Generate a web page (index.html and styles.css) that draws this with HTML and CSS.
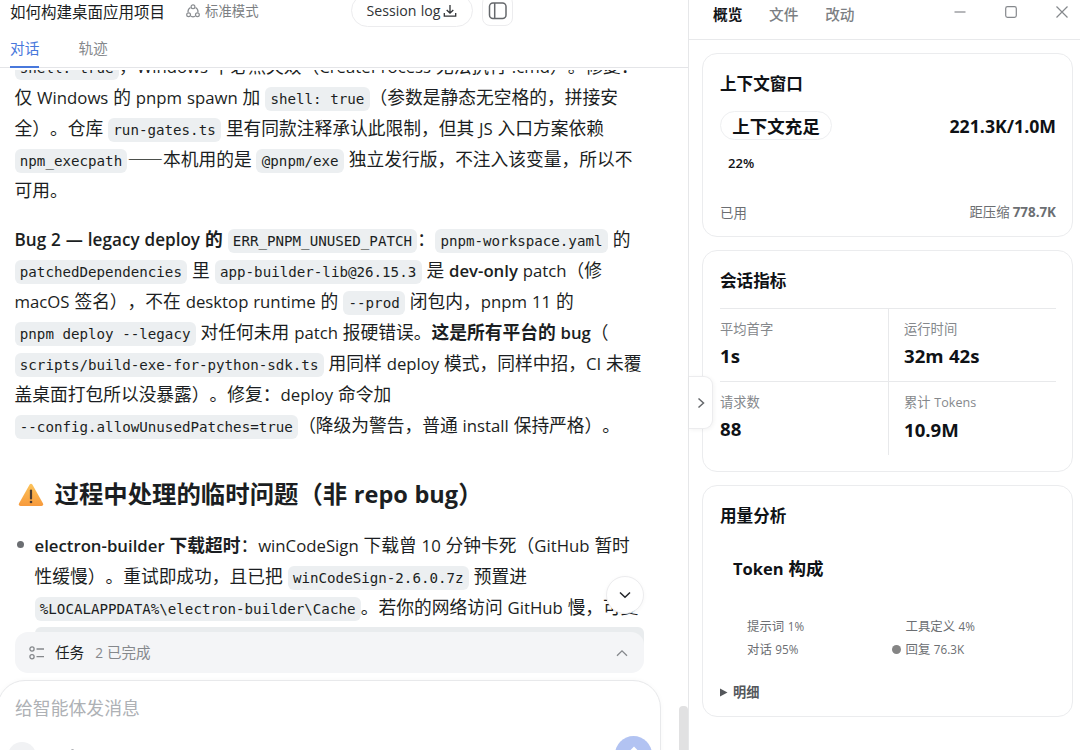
FILE: index.html
```html
<!DOCTYPE html>
<html lang="zh-CN">
<head>
<meta charset="utf-8">
<title>如何构建桌面应用项目</title>
<link rel="stylesheet" href="styles.css">
</head>
<body>
<main class="chat">
  <header class="topbar">
    <h1 class="topbar-title">如何构建桌面应用项目</h1>
    <svg class="mode-icon" width="14" height="14" viewBox="0 0 14 14" fill="none" stroke="#8a8d91" stroke-width="1.2"><circle cx="7" cy="2.7" r="1.9"/><circle cx="2.6" cy="10.8" r="1.9"/><circle cx="11.4" cy="10.8" r="1.9"/><path d="M4.5 3.6C2.6 4.8 1.8 6.500 2 8.300M9.500 3.600c1.900 1.200 2.700 2.900 2.500 4.700M5 12.300c1.200.6 2.800.6 4 0"/></svg>
    <span class="mode">标准模式</span>
    <button class="log-btn"><span class="l">Session log</span><svg width="14" height="14" viewBox="0 0 14 14" fill="none" stroke="#303336" stroke-width="1.3"><path d="M7 1v8M3.700 6 7 9.200 10.300 6M1.300 9v3.200h11.400V9"/></svg></button>
    <button class="side-btn"><svg width="20" height="18" viewBox="0 0 20 18" fill="none" stroke="#65686c" stroke-width="1.5"><rect x="1.500" y="1" width="16.500" height="15.500" rx="3.500"/><path d="M6.700 1v15.500"/></svg></button>
  </header>
  <nav class="tabs"><a class="tab active">对话</a><a class="tab">轨迹</a></nav>
  <section class="messages">
    <div class="para first">
      <div class="line"><code>shell: true</code>，<span class="l">Windows </span>下必然失效（<span class="l">CreateProcess </span>无法执行<span class="l"> .cmd</span>）。修复：</div>
      <div class="line">仅<span class="l"> Windows </span>的<span class="l"> pnpm spawn </span>加<span class="l"> </span><code>shell: true</code>（参数是静态无空格的，拼接安</div>
      <div class="line">全）。仓库<span class="l"> </span><code>run-gates.ts</code><span class="l"> </span>里有同款注释承认此限制，但其<span class="l"> JS </span>入口方案依赖</div>
      <div class="line"><code>npm_execpath</code>——本机用的是<span class="l"> </span><code>@pnpm/exe</code><span class="l"> </span>独立发行版，不注入该变量，所以不</div>
      <div class="line">可用。</div>
    </div>
    <div class="para">
      <div class="line"><b class="wide"><span class="l">Bug 2 — legacy deploy </span>的</b><span class="l"> </span><code>ERR_PNPM_UNUSED_PATCH</code>：<code>pnpm-workspace.yaml</code><span class="l"> </span>的</div>
      <div class="line"><code>patchedDependencies</code><span class="l"> </span>里<span class="l"> </span><code>app-builder-lib@26.15.3</code><span class="l"> </span>是<span class="l"> <b>dev-only</b> patch</span>（修</div>
      <div class="line"><span class="l">macOS </span>签名），不在<span class="l"> desktop runtime </span>的<span class="l"> </span><code>--prod</code><span class="l"> </span>闭包内，<span class="l">pnpm 11 </span>的</div>
      <div class="line"><code>pnpm deploy --legacy</code><span class="l"> </span>对任何未用<span class="l"> patch </span>报硬错误。<b>这是所有平台的<span class="l"> bug</span></b>（</div>
      <div class="line"><code>scripts/build-exe-for-python-sdk.ts</code><span class="l"> </span>用同样<span class="l"> deploy </span>模式，同样中招，<span class="l">CI </span>未覆</div>
      <div class="line">盖桌面打包所以没暴露）。修复：<span class="l">deploy </span>命令加</div>
      <div class="line"><code>--config.allowUnusedPatches=true</code>（降级为警告，普通<span class="l"> install </span>保持严格）。</div>
    </div>
    <h2 class="heading">
      <svg class="warn" width="26" height="24" viewBox="0 0 26 24"><defs><linearGradient id="w" x1="0" y1="0" x2="0" y2="1"><stop offset="0" stop-color="#fcc35a"/><stop offset="1" stop-color="#f79a3c"/></linearGradient></defs><path d="M11.500 1.800q1.500-2 3 0L25 20.500q.800 2.500-1.500 2.500h-21Q.2 23 1 20.500Z" fill="url(#w)"/><path d="M13 7.500v8" stroke="#4a3b32" stroke-width="2.200" stroke-linecap="round"/><circle cx="13" cy="19" r="1.300" fill="#4a3b32"/></svg>
      <span>过程中处理的临时问题（非<span class="l"> repo bug</span>）</span>
    </h2>
    <ul class="list">
      <li>
        <div class="line"><b><span class="l">electron-builder </span>下载超时</b>：<span class="l">winCodeSign </span>下载曾<span class="l"> 10 </span>分钟卡死（<span class="l">GitHub </span>暂时</div>
        <div class="line">性缓慢）。重试即成功，且已把<span class="l"> </span><code>winCodeSign-2.6.0.7z</code><span class="l"> </span>预置进</div>
        <div class="line"><code>%LOCALAPPDATA%\electron-builder\Cache</code>。若你的网络访问<span class="l"> GitHub </span>慢，可复</div>
        <div class="block"></div>
      </li>
    </ul>
  </section>
  <button class="to-bottom"><svg width="14" height="10" viewBox="0 0 14 10" fill="none" stroke="#222529" stroke-width="1.500"><path d="m2 2.500 5 4.800 5-4.800"/></svg></button>
  <div class="dock">
    <div class="tasks">
      <svg width="15" height="14" viewBox="0 0 15 14" fill="none" stroke="#85888c" stroke-width="1.300"><circle cx="3" cy="3" r="2.100"/><circle cx="3" cy="10.700" r="2.100"/><path d="M7.500 3H15M7.500 10.700H15"/></svg>
      <span class="tasks-name">任务</span><span class="tasks-state"><span class="l">2 </span>已完成</span>
      <svg class="tasks-arrow" width="12" height="8" viewBox="0 0 12 8" fill="none" stroke="#85888c" stroke-width="1.300"><path d="m1 6.800 5-5 5 5"/></svg>
    </div>
    <div class="composer">
      <div class="placeholder">给智能体发消息</div>
      <div class="composer-tools"><span class="add"></span><span class="mark"></span><span class="send"><svg width="16" height="16" viewBox="0 0 16 16" fill="none" stroke="#fff" stroke-width="2"><path d="M8 15V2M2.500 7.500 8 2l5.500 5.500"/></svg></span></div>
    </div>
  </div>
  <div class="scrollbar"></div>
</main>
<aside class="panel">
  <header class="panel-head">
    <span class="ptab on">概览</span><span class="ptab">文件</span><span class="ptab">改动</span>
    <div class="win">
      <svg width="12" height="12" viewBox="0 0 12 12" fill="none" stroke="#85888c" stroke-width="1.200"><path d="M.5 6h11"/></svg>
      <svg width="12" height="12" viewBox="0 0 12 12" fill="none" stroke="#85888c" stroke-width="1.200"><rect x=".7" y=".7" width="10.600" height="10.600" rx="1.800"/></svg>
      <svg width="12" height="12" viewBox="0 0 12 12" fill="none" stroke="#85888c" stroke-width="1.200"><path d="m.5.500 11 11M11.500.500l-11 11"/></svg>
    </div>
  </header>
  <section class="card context">
    <h3>上下文窗口</h3>
    <div class="row"><span class="badge">上下文充足</span><b class="l amount">221.3K/1.0M</b></div>
    <div class="percent"><span class="l">22%</span></div>
    <div class="row foot"><span>已用</span><span>距压缩 <b class="l">778.7K</b></span></div>
  </section>
  <section class="card metrics">
    <h3>会话指标</h3>
    <div class="grid">
      <div class="cell"><span>平均首字</span><b><i class="l">1s</i></b></div>
      <div class="cell"><span>运行时间</span><b><i class="l">32m 42s</i></b></div>
      <div class="cell"><span>请求数</span><b><i class="l">88</i></b></div>
      <div class="cell"><span>累计<i class="l"> Tokens</i></span><b><i class="l">10.9M</i></b></div>
    </div>
  </section>
  <section class="card usage">
    <h3>用量分析</h3>
    <h4><span class="l">Token </span>构成</h4>
    <div class="legend">
      <span>提示词<i class="l"> 1%</i></span><span>工具定义<i class="l"> 4%</i></span>
      <span>对话<i class="l"> 95%</i></span><span class="reply">回复<i class="l"> 76.3K</i></span>
    </div>
    <div class="detail"><svg width="8" height="9" viewBox="0 0 8 9"><path d="M0 .5 7.500 4.500 0 8.500Z" fill="#54575b"/></svg>明细</div>
  </section>
  <button class="collapse"><svg width="8" height="12" viewBox="0 0 8 12" fill="none" stroke="#65686c" stroke-width="1.500"><path d="m1.500 1.500 5 4.500-5 4.500"/></svg></button>
</aside>
</body>
</html>
```
FILE: styles.css
```css
* { box-sizing: border-box; }
body { margin: 0; width: 1080px; height: 750px; display: flex; overflow: hidden; background: #fff; color: #1b1e22; font-family: "Noto Sans CJK SC", sans-serif; text-spacing-trim: space-all; white-space: nowrap; }
h1, h2, h3, h4 { margin: 0; }
i { font-style: normal; }
button { display: flex; align-items: center; justify-content: center; padding: 0; background: #fff; border: 1px solid #ececee; color: inherit; font-family: inherit; }
svg { flex: none; display: block; }
.l { font-family: "Open Sans", "Noto Sans", sans-serif; font-size: .945em; word-spacing: .5px; white-space: pre; }

.chat { position: relative; width: 689px; height: 750px; border-right: 1px solid #e6e7e9; display: flex; flex-direction: column; overflow: hidden; }
.topbar { height: 40px; flex: none; display: flex; align-items: flex-start; padding-left: 10px; }
.topbar-title { font-size: 15.5px; font-weight: 400; line-height: 22px; width: 176px; }
.mode-icon { margin-top: 4px; }
.mode { margin-left: 5px; width: 146px; font-size: 13.4px; line-height: 21px; color: #7c7f83; }
.log-btn { width: 122px; height: 33px; margin-top: -6px; border-radius: 17px; font-size: 15px; gap: 3px; color: #303336; }
.side-btn { width: 31px; height: 31px; margin: -5px 0 0 9px; border-radius: 8px; }
.tabs { height: 28px; flex: none; display: flex; gap: 39px; padding-left: 10px; border-bottom: 1px solid #e4e5e8; }
.tab { height: 28px; font-size: 14.7px; line-height: 16px; color: #85888c; }
.tab.active { color: #4878dc; border-bottom: 2px solid #4878dc; }

.messages { flex: 1; min-height: 0; margin-top: 2px; overflow: hidden; padding-left: 14.500px; font-size: 17.740px; }
.line { height: 31px; line-height: 31px; }
.para.first { margin-top: -20px; }
.para { margin-bottom: 18px; }
b { font-weight: 700; }
.line b .l, .line .l b { font-weight: 600; }
.line b.wide .l { font-size: .965em; }
code { font-family: "DejaVu Sans Mono", monospace; font-size: 14.180px; background: #eceff1; border-radius: 6px; padding: 4px 5.300px; }
.heading { display: flex; align-items: center; height: 40px; margin: 33px 0 16px; padding-left: 4px; gap: 10px; font-size: 24.400px; line-height: 40px; }
.heading .l { font-size: .965em; }
.warn { margin: 4px 0 0 -1px; }
.heading > span { margin-left: 1px; }
.list { list-style: none; margin: 0; padding: 0 0 0 20px; }
.list li { position: relative; }
.list li::before { content: ""; position: absolute; left: -18px; top: 12px; width: 7px; height: 7px; border-radius: 50%; background: #6b6e72; }
.block { width: 609px; height: 60px; margin-top: 5px; border-radius: 6px; background: #e9ecee; }
.to-bottom { position: absolute; left: 606px; top: 576px; width: 38px; height: 38px; border-radius: 50%; box-shadow: 0 1px 4px #0000000a; }

.dock { position: absolute; left: 0; bottom: 0; width: 662px; height: 118px; }
.dock::before { content: ""; position: absolute; inset: 20px 0 0; background: #fff; }
.tasks { position: relative; display: flex; align-items: center; width: 629px; height: 41px; margin-left: 15px; padding: 0 16px 0 14px; border-radius: 13px; background: #f4f5f7; }
.tasks-name { margin-left: 11px; font-size: 14.600px; line-height: 20px; margin-top: -1px; }
.tasks-state { margin-left: 11px; font-size: 14.500px; line-height: 20px; margin-top: -1px; color: #85888c; }
.tasks-arrow { margin-left: auto; }
.composer { position: relative; width: 664px; height: 110px; margin: 7px 0 0 -3px; padding: 12px 8px 0 17px; border: 1px solid #e8e9eb; border-radius: 28px; background: #fff; box-shadow: 0 0 5px #00000008; }
.placeholder { font-size: 17.850px; line-height: 28px; color: #aeb1b5; }
.composer-tools { display: flex; align-items: flex-start; padding-top: 15px; }
.add { width: 28px; height: 28px; margin: 6px 0 0 -7px; border-radius: 50%; background: #f1f2f4; }
.mark { width: 3px; height: 3px; margin: 13px 0 0 35px; border-radius: 50%; background: #aeb1b5; }
.send { display: flex; justify-content: center; width: 37px; height: 37px; margin-left: auto; padding-top: 10px; border-radius: 50%; background: #b2c3f2; }
.scrollbar { position: absolute; left: 679px; top: 706px; width: 9px; height: 60px; border-radius: 4px; background: #e1e1e2; }

.panel { position: relative; width: 391px; height: 750px; }
.panel-head { display: flex; align-items: flex-start; height: 40px; margin-bottom: 13px; padding: 3px 12px 0 24px; gap: 26.700px; border-bottom: 1px solid #e8e9eb; }
.ptab { font-size: 14.700px; line-height: 21px; font-weight: 500; color: #7c7f83; }
.ptab.on { font-weight: 700; color: #111418; }
.win { display: flex; gap: 39px; margin: 3px 0 0 auto; }
.card { width: 371px; margin: 0 0 13px 13px; padding: 15px 16px 16px 17px; border: 1px solid #ebecee; border-radius: 15px; color: #0f1216; }
.card h3 { font-size: 16.600px; line-height: 28px; }
.context { height: 184px; }
.row { display: flex; align-items: center; justify-content: space-between; }
.context .row:first-of-type { margin-top: 14px; }
.badge { width: 112px; height: 29px; border: 1px solid #eeeff1; border-radius: 15px; text-align: center; line-height: 27px; font-size: 17.500px; font-weight: 700; }
.amount { font-size: 17.700px; }
.percent { margin: 12px 0 0 8px; font-size: 13.800px; line-height: 20px; font-weight: 600; }
.row.foot { margin-top: 28px; font-size: 13.400px; line-height: 20px; color: #6b6e72; }
.foot b { font-weight: 700; font-size: 1em; }
.metrics { height: 222px; }
.grid { display: grid; grid-template-columns: 169px 167px; grid-template-rows: 73px 74px; margin-top: 14px; }
.cell { padding-top: 9px; border-top: 1px solid #e8e9eb; }
.cell:nth-child(odd) { border-right: 1px solid #e8e9eb; }
.cell:nth-child(even) { padding-left: 15px; }
.cell span, .cell b { display: block; }
.cell > span { font-size: 13.300px; line-height: 22px; color: #85888c; }
.cell > b { margin-top: 2px; font-size: 19.700px; line-height: 26px; }
.usage { height: 232px; margin-bottom: 0; }
.usage h4 { margin: 24px 0 0 13px; font-size: 17.500px; line-height: 30px; }
.legend { display: grid; grid-template-columns: 158.500px 1fr; margin: 31px 0 0 27px; font-size: 12.400px; line-height: 22.600px; color: #6b6e72; }
.legend span { position: relative; }
.reply::before { content: ""; position: absolute; left: -14px; top: 7px; width: 9px; height: 9px; border-radius: 50%; background: #858585; }
.detail { display: flex; align-items: center; gap: 5px; margin-top: 21px; font-size: 13.200px; line-height: 22px; font-weight: 600; color: #54575b; }
.collapse { position: absolute; left: 0; top: 376px; width: 24px; height: 53px; border-left: 0; border-radius: 0 9px 9px 0; box-shadow: 1px 1px 4px #0000000d; }
```
